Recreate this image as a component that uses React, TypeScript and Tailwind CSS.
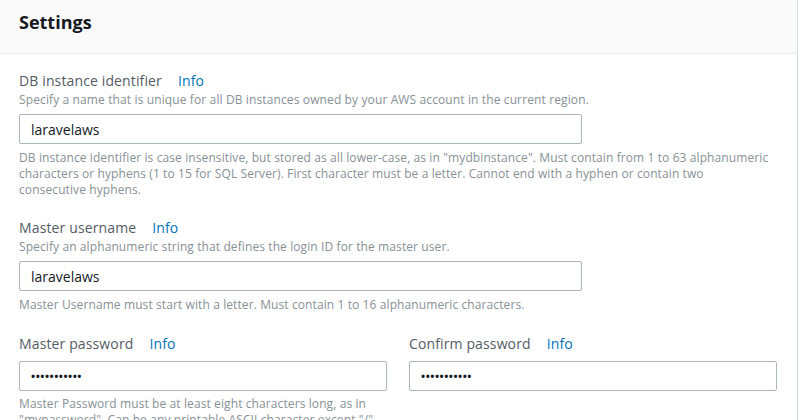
import React from "react";

const font = { fontFamily: '"Open Sans", "Liberation Sans", Arial, sans-serif' };

function Label({ text }: { text: string }) {
  return (
    <div className="flex items-center h-[20px] text-[14px] leading-[20px] tracking-[0.13px]">
      <span className="text-[#545b64]">{text}</span>
      <span className="ml-[16px] text-[#0073bb]">Info</span>
    </div>
  );
}

function Input({ value, w, dots }: { value: string; w: string; dots?: boolean }) {
  return (
    <div
      className={`${w} h-[30px] border border-[#aab7b8] rounded-[2px] bg-white flex items-center px-[11px] text-[14px] text-[#16191f]`}
    >
      {dots ? <span className="text-[11px] tracking-[0.5px] font-bold">{value}</span> : value}
    </div>
  );
}

export default function App() {
  return (
    <div className="w-[800px] h-[420px] overflow-hidden bg-white flex" style={font}>
      <div className="w-[798px] h-full border-r border-[#d5dbdb] flex flex-col">
        <div className="h-[54px] shrink-0 bg-[#fafafa] border-b border-[#eaeded] px-[19px] pt-[9px]">
          <h1 className="text-[18px] leading-[26px] font-bold text-[#16191f]">Settings</h1>
        </div>
        <div className="px-[19px] pt-[17px] flex flex-col">
          <Label text="DB instance identifier" />
          <p className="mt-[1px] text-[12px] leading-[16px] tracking-[0.12px] text-[#879196]">
            Specify a name that is unique for all DB instances owned by your AWS account in the current region.
          </p>
          <div className="mt-[6px]">
            <Input value="laravelaws" w="w-[563px]" />
          </div>
          <p className="mt-[6px] text-[12px] leading-[16px] tracking-[0.1px] text-[#879196] whitespace-nowrap">
            DB instance identifier is case insensitive, but stored as all lower-case, as in "mydbinstance". Must contain from 1 to 63 alphanumeric
            <br />
            characters or hyphens (1 to 15 for SQL Server). First character must be a letter. Cannot end with a hyphen or contain two
            <br />
            consecutive hyphens.
          </p>

          <div className="mt-[20px]">
            <Label text="Master username" />
          </div>
          <p className="mt-[1px] text-[12px] leading-[16px] tracking-[0.1px] text-[#879196]">
            Specify an alphanumeric string that defines the login ID for the master user.
          </p>
          <div className="mt-[6px]">
            <Input value="laravelaws" w="w-[563px]" />
          </div>
          <p className="mt-[6px] text-[12px] leading-[16px] tracking-[0.1px] text-[#879196]">
            Master Username must start with a letter. Must contain 1 to 16 alphanumeric characters.
          </p>

          <div className="mt-[21px] flex gap-[22px]">
            <div className="w-[368px] flex flex-col">
              <Label text="Master password" />
              <div className="mt-[7px]">
                <Input value="•••••••••••" w="w-[368px]" dots />
              </div>
              <p className="mt-[5px] text-[12px] leading-[16px] tracking-[0.1px] text-[#879196] whitespace-nowrap">
                Master Password must be at least eight characters long, as in
                <br />
                "mypassword". Can be any printable ASCII character except "/",
              </p>
            </div>
            <div className="w-[368px] flex flex-col">
              <Label text="Confirm password" />
              <div className="mt-[7px]">
                <Input value="•••••••••••" w="w-[368px]" dots />
              </div>
            </div>
          </div>
        </div>
      </div>
    </div>
  );
}
